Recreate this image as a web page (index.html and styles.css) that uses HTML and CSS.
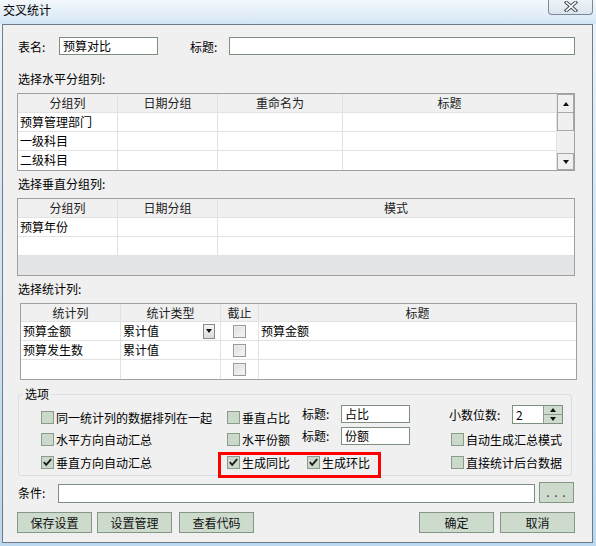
FILE: index.html
```html
<!DOCTYPE html>
<html lang="zh">
<head>
<meta charset="utf-8">
<title>交叉统计</title>
<link rel="stylesheet" href="styles.css">
</head>
<body>
<div class="titlebar">
  <span class="title">交叉统计</span>
  <div class="close">
    <svg width="14" height="11" viewBox="0 0 14 11"><path d="M2.5 1.5 L11.5 9.5 M11.5 1.5 L2.5 9.5" stroke="#4a4f57" stroke-width="3.6" stroke-linecap="square"/><path d="M2.5 1.5 L11.5 9.5 M11.5 1.5 L2.5 9.5" stroke="#ffffff" stroke-width="1.6" stroke-linecap="square"/></svg>
  </div>
</div>
<div class="window">
  <div class="row-name">
    <span class="lbl-name">表名:</span>
    <div class="input in-name">预算对比</div>
    <span class="lbl-title">标题:</span>
    <div class="input in-title"></div>
  </div>

  <div class="sec sec1">选择水平分组列:</div>
  <div class="grid g1">
    <div class="cells">
      <div class="c h">分组列</div><div class="c h">日期分组</div><div class="c h">重命名为</div><div class="c h">标题</div>
      <div class="c">预算管理部门</div><div class="c"></div><div class="c"></div><div class="c"></div>
      <div class="c">一级科目</div><div class="c"></div><div class="c"></div><div class="c"></div>
      <div class="c">二级科目</div><div class="c"></div><div class="c"></div><div class="c"></div>
    </div>
    <div class="vscroll">
      <div class="sbtn up-btn"><span class="tri-up"></span></div>
      <div class="thumb"></div>
      <div class="track"></div>
      <div class="sbtn dn-btn"><span class="tri-dn"></span></div>
    </div>
  </div>

  <div class="sec sec2">选择垂直分组列:</div>
  <div class="grid g2">
    <div class="cells">
      <div class="c h">分组列</div><div class="c h">日期分组</div><div class="c h last">模式</div>
      <div class="c">预算年份</div><div class="c"></div><div class="c last"></div>
      <div class="c"></div><div class="c"></div><div class="c last"></div>
      <div class="empty-area"></div>
    </div>
  </div>

  <div class="sec sec3">选择统计列:</div>
  <div class="grid g3">
    <div class="cells">
      <div class="c h">统计列</div><div class="c h">统计类型</div><div class="c h">截止</div><div class="c h last">标题</div>
      <div class="c">预算金额</div><div class="c combo"><span>累计值</span><span class="dd"><span class="tri-dn"></span></span></div><div class="c mid"><span class="gcb"></span></div><div class="c last">预算金额</div>
      <div class="c">预算发生数</div><div class="c">累计值</div><div class="c mid"><span class="gcb"></span></div><div class="c last"></div>
      <div class="c"></div><div class="c"></div><div class="c mid"><span class="gcb"></span></div><div class="c last"></div>
    </div>
  </div>

  <fieldset class="opts">
    <legend>选项</legend>
    <div class="opt-body">
      <div class="orow ra">
        <div class="col1"><label class="ck"><span class="cb"></span>同一统计列的数据排列在一起</label></div>
        <div class="col2">
          <label class="ck ck2"><span class="cb"></span>垂直占比</label>
          <span class="lbl2">标题:</span>
          <div class="input in2">占比</div>
        </div>
        <div class="col3">
          <span class="lbl3">小数位数:</span>
          <div class="spin">
            <span class="spin-val">2</span>
            <div class="spin-btns"><div class="sb"><span class="tri-up"></span></div><div class="sb"><span class="tri-dn"></span></div></div>
          </div>
        </div>
      </div>
      <div class="orow rb">
        <div class="col1"><label class="ck"><span class="cb"></span>水平方向自动汇总</label></div>
        <div class="col2">
          <label class="ck ck2"><span class="cb"></span>水平份额</label>
          <span class="lbl2">标题:</span>
          <div class="input in2">份额</div>
        </div>
        <div class="col3"><label class="ck ck3"><span class="cb"></span>自动生成汇总模式</label></div>
      </div>
      <div class="orow rc">
        <div class="col1"><label class="ck ckc"><span class="cb on"><svg width="11" height="11" viewBox="0 0 11 11"><path d="M1.8 5.2 L4.2 7.8 L9.2 2.2" fill="none" stroke="#1c1c1c" stroke-width="1.9"/></svg></span>垂直方向自动汇总</label></div>
        <div class="col2">
          <div class="redbox">
            <label class="ck ck-tb"><span class="cb on"><svg width="11" height="11" viewBox="0 0 11 11"><path d="M1.8 5.2 L4.2 7.8 L9.2 2.2" fill="none" stroke="#1c1c1c" stroke-width="1.9"/></svg></span>生成同比</label>
            <label class="ck"><span class="cb on"><svg width="11" height="11" viewBox="0 0 11 11"><path d="M1.8 5.2 L4.2 7.8 L9.2 2.2" fill="none" stroke="#1c1c1c" stroke-width="1.9"/></svg></span>生成环比</label>
          </div>
        </div>
        <div class="col3"><label class="ck ck3 ckc"><span class="cb"></span>直接统计后台数据</label></div>
      </div>
    </div>
  </fieldset>

  <div class="cond">
    <span class="lbl-cond">条件:</span>
    <div class="input in-cond"></div>
    <div class="btn dots">. . .</div>
  </div>

  <div class="btns">
    <div class="btn">保存设置</div>
    <div class="btn b2">设置管理</div>
    <div class="btn b3">查看代码</div>
    <div class="btn ok">确定</div>
    <div class="btn cancel">取消</div>
  </div>
</div>
</body>
</html>
```

FILE: styles.css
```css
* { box-sizing: border-box; }
html, body { margin: 0; padding: 0; }
body {
  width: 596px;
  height: 546px;
  overflow: hidden;
  font-family: "Noto Sans CJK SC", "Liberation Sans", sans-serif;
  font-size: 12px;
  color: #000;
  background: linear-gradient(180deg, #eef5fb 0%, #d6e8f6 35%, #bcd8ef 100%);
}

.titlebar {
  height: 24px;
  display: flex;
  justify-content: space-between;
  align-items: flex-start;
  background: linear-gradient(180deg, #f3f8fc 0%, #e2eef8 60%, #d2e5f4 100%);
}
.title { padding-left: 3px; line-height: 20px; }
.close {
  width: 45px;
  height: 15px;
  margin-right: 3px;
  border: 1px solid #7b8896;
  border-top: none;
  border-radius: 0 0 4px 4px;
  background: linear-gradient(180deg, #eef3f8, #dbe5ee);
  display: flex;
  justify-content: center;
  padding-top: 1px;
}

.window {
  margin-left: 2px;
  width: 591px;
  height: 519px;
  border: 1px solid #6f7b87;
  background: #f0f0f0;
  padding: 12px 17px 0 14px;
}

.input {
  height: 18px;
  border: 1px solid #7f8f7f;
  background: #fff;
  line-height: 16px;
  padding-left: 3px;
  white-space: nowrap;
}

.row-name { display: flex; align-items: center; height: 18px; }
.lbl-name { width: 42px; padding-left: 1px; }
.in-name { width: 99px; }
.lbl-title { margin-left: 32px; width: 39px; }
.in-title { flex: 1; }

.sec { line-height: 14px; padding-left: 1px; margin-bottom: 7px; }
.sec1 { margin-top: 17px; }
.sec2 { margin-top: 6px; }
.sec3 { margin-top: 6px; }

.grid { border: 1px solid #a0a0a0; background: #fff; display: flex; }
.cells { flex: 1; display: grid; }
.g1 .cells { grid-template-columns: 100px 100px 125px 1fr; }
.g2 .cells { grid-template-columns: 100px 100px 1fr; }
.g3 { margin: 0 -2px 0 3px; }
.g3 .cells { grid-template-columns: 100px 100px 38px 1fr; }

.c {
  height: 19px;
  border-right: 1px solid #e2e2e2;
  border-bottom: 1px solid #e2e2e2;
  line-height: 18px;
  padding-left: 2px;
  white-space: nowrap;
  overflow: hidden;
}
.c.last { border-right: none; }
.h { background: #f0f0f0; text-align: center; padding-left: 0; color: #222; }
.g3 .h { height: 18px; line-height: 17px; }
.g1 .cells > .c:nth-last-child(-n+4) { border-bottom: none; }
.g3 .cells > .c:nth-last-child(-n+4) { border-bottom: none; }
.empty-area { grid-column: 1 / -1; height: 19px; background: #e4e5e7; }

.combo { display: flex; justify-content: space-between; align-items: center; padding-right: 5px; }
.dd {
  width: 12px;
  height: 15px;
  border: 1px solid #8a8a8a;
  background: linear-gradient(180deg, #f4f4f4, #dcdcdc);
  display: flex;
  align-items: center;
  justify-content: center;
}
.mid { display: flex; align-items: center; justify-content: center; padding-left: 0; }
.gcb {
  width: 13px;
  height: 13px;
  border: 1px solid #9a9a9a;
  background: linear-gradient(135deg, #dedede, #f6f6f6);
  box-shadow: inset 0 0 0 1px #eeeeee;
}

.tri-up {
  width: 0; height: 0;
  border-left: 3.5px solid transparent;
  border-right: 3.5px solid transparent;
  border-bottom: 4px solid #111;
}
.tri-dn {
  width: 0; height: 0;
  border-left: 3.5px solid transparent;
  border-right: 3.5px solid transparent;
  border-top: 4px solid #111;
}

.vscroll { width: 17px; display: flex; flex-direction: column; background: #f0f0f0; }
.sbtn {
  border: 1px solid #a8a8a8;
  background: #f0f0f0;
  display: flex;
  align-items: center;
  justify-content: center;
}
.up-btn { height: 19px; }
.dn-btn { height: 17px; }
.thumb { height: 18px; border: 1px solid #a8a8a8; border-top: none; background: #f0f0f0; }
.track { flex: 1; }

.opts {
  margin: 7px 3px 0 1px;
  padding: 0;
  border: 1px solid #d5dfe5;
  border-radius: 3px;
  min-width: 0;
}
.opts legend { margin-left: 4px; padding: 0 2px; line-height: 14px; }
.opt-body { padding: 4px 0 0 22px; }
.orow { display: flex; height: 19px; }
.rb { margin-top: 3px; }
.rc { margin-top: 6px; height: 26px; margin-bottom: -3px; }
.col1 { width: 186px; display: flex; align-items: flex-end; }
.col2 { width: 222px; display: flex; align-items: flex-start; }
.col3 { flex: 1; display: flex; align-items: flex-start; }
.ra .col3 { align-items: center; }
.rb .col3 { align-items: flex-end; }
.rc .col1, .rc .col3 { align-items: flex-start; }

.ck { display: flex; align-items: center; gap: 2px; height: 13px; line-height: 13px; white-space: nowrap; }
.ck2 { width: 75px; align-self: flex-end; }
.ck3 { margin-left: 2px; }
.ckc { margin-top: 4px; }
.cb {
  width: 13px;
  height: 13px;
  border: 1px solid #8c9c8c;
  background: #cbd9cb;
  display: flex;
  align-items: center;
  justify-content: center;
  flex: none;
}
.lbl2 { width: 39px; line-height: 18px; }
.in2 { width: 69px; }
.lbl3 { width: 63px; }

.spin {
  width: 51px;
  height: 19px;
  border: 1px solid #7f8f7f;
  background: #fff;
  display: flex;
}
.spin-val { flex: 1; padding-left: 3px; line-height: 17px; }
.spin-btns { width: 19px; display: flex; flex-direction: column; border-left: 1px solid #8c9c8c; }
.sb { flex: 1; background: #cddbcd; display: flex; align-items: center; justify-content: center; }
.sb + .sb { border-top: 1px solid #8c9c8c; }

.redbox {
  margin-left: -9px;
  width: 163px;
  height: 26px;
  border: 3px solid #ff0000;
  display: flex;
  align-items: flex-start;
  padding: 1px 0 0 6px;
}
.ck-tb { width: 80px; }

.btns { display: flex; margin-top: 9px; }
.btn {
  width: 75px;
  height: 21px;
  border: 1px solid #869686;
  background: #cddbcd;
  text-align: center;
  line-height: 19px;
  color: #111;
  flex: none;
}
.b2 { margin-left: 5px; }
.b3 { margin-left: 7px; }
.ok { margin-left: auto; }
.cancel { margin-left: 6px; }

.cond { display: flex; align-items: flex-end; height: 21px; margin-top: 6px; }
.lbl-cond { width: 41px; padding-left: 1px; align-self: center; flex: none; }
.in-cond { width: 477px; height: 19px; flex: none; }
.cond .dots { margin-left: 4px; width: 35px; height: 21px; letter-spacing: 1px; line-height: 17px; color: #333; }
```
